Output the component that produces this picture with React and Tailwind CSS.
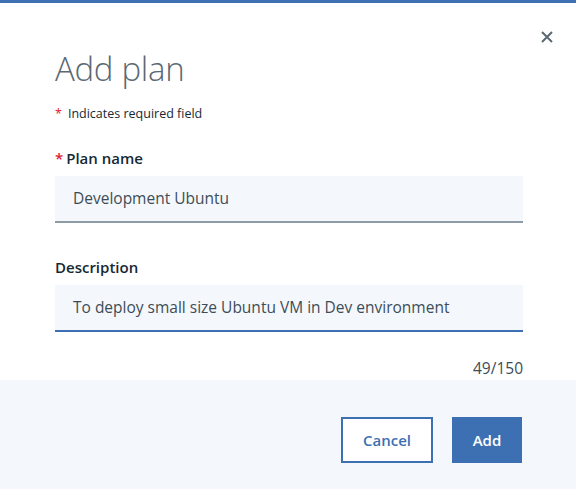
import React from 'react';

const font = { fontFamily: '"Open Sans", "Liberation Sans", sans-serif' };

const Field = ({ label, required, value, focused }) => (
  <div className="flex flex-col">
    <label className="text-[15px] font-semibold text-[#152935] leading-[20px] mb-[8px]">
      {required && <span className="text-[#e0182d] mr-[3px]">*</span>}
      {label}
    </label>
    <div
      className={`h-[47px] bg-[#f4f7fb] flex items-center px-[18px] text-[15.5px] text-[#3d4d57] border-b-2 ${
        focused ? 'border-[#3d70b2]' : 'border-[#8c9ba5]'
      }`}
    >
      {value}
    </div>
  </div>
);

export default function App() {
  return (
    <div style={font} className="w-[576px] h-[489px] bg-white flex flex-col overflow-hidden">
      <div className="h-[3px] bg-[#3d70b2] shrink-0" />
      <div className="relative flex-1 flex flex-col pl-[55px] pr-[53px] pt-[44px]">
        <button className="absolute top-[28px] right-[23px] text-[#5a6872]">
          <svg width="12" height="12" viewBox="0 0 12 12">
            <path d="M1 1 L11 11 M11 1 L1 11" stroke="currentColor" strokeWidth="2" />
          </svg>
        </button>
        <h1 className="text-[33px] font-light text-[#5a6872] leading-[44px] tracking-[-0.3px]">Add plan</h1>
        <p className="mt-[15px] text-[12.5px] text-[#152935] leading-[16px]">
          <span className="text-[#e0182d] mr-[6px]">*</span>Indicates required field
        </p>
        <div className="mt-[26px] flex flex-col gap-[34px]">
          <Field label="Plan name" required value="Development Ubuntu" />
          <Field label="Description" value="To deploy small size Ubuntu VM in Dev environment" focused />
        </div>
        <div className="mt-[26px] text-right text-[15.5px] text-[#3d4d57] leading-[20px]">49/150</div>
      </div>
      <div className="h-[109px] shrink-0 bg-[#f4f7fb] flex justify-end items-start pt-[37px] pr-[54px] gap-[19px]">
        <button className="w-[92px] h-[46px] border-2 border-[#3d70b2] bg-white text-[#3d70b2] text-[15px] font-semibold">
          Cancel
        </button>
        <button className="w-[70px] h-[46px] bg-[#3d70b2] text-white text-[15px] font-semibold">
          Add
        </button>
      </div>
    </div>
  );
}
